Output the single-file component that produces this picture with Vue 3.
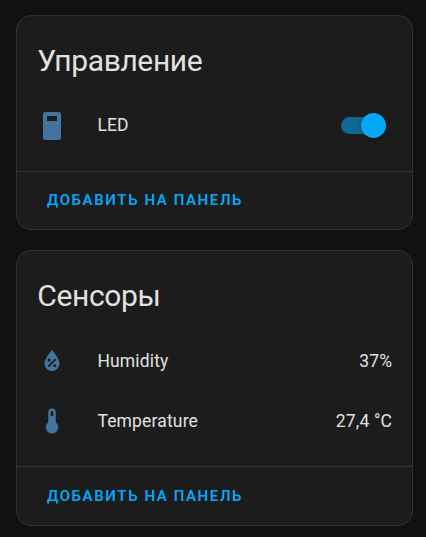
<script setup>
const cards = [
  {
    id: 'controls',
    title: 'Управление',
    rows: [{ icon: 'switch', name: 'LED', toggle: true }],
  },
  {
    id: 'sensors',
    title: 'Сенсоры',
    rows: [
      { icon: 'humidity', name: 'Humidity', value: '37%' },
      { icon: 'thermometer', name: 'Temperature', value: '27,4 °C' },
    ],
  },
]

const icons = {
  switch:
    'M6.4 1.6H17.6A1.6 1.6 0 0 1 19.2 3.2V22.4A1.6 1.6 0 0 1 17.6 24H6.4A1.6 1.6 0 0 1 4.8 22.4V3.2A1.6 1.6 0 0 1 6.4 1.6M8.4 4.8A.4 .4 0 0 0 8 5.2V8.4A.4 .4 0 0 0 8.4 8.8H15.6A.4 .4 0 0 0 16 8.4V5.2A.4 .4 0 0 0 15.6 4.8Z',
  humidity:
    'M12,3.25C12,3.25 6,10 6,14C6,17.32 8.69,20 12,20A6,6 0 0,0 18,14C18,10 12,3.25 12,3.25M14.47,9.97L15.53,11.03L9.53,17.03L8.47,15.97M9.75,10A1.25,1.25 0 0,1 11,11.25A1.25,1.25 0 0,1 9.75,12.5A1.25,1.25 0 0,1 8.5,11.25A1.25,1.25 0 0,1 9.75,10M14.25,14.5A1.25,1.25 0 0,1 15.5,15.75A1.25,1.25 0 0,1 14.25,17A1.25,1.25 0 0,1 13,15.75A1.25,1.25 0 0,1 14.25,14.5Z',
  thermometer:
    'M15 13V5A3 3 0 0 0 9 5V13A5 5 0 1 0 15 13M12 4A1 1 0 0 1 13 5V8H11V5A1 1 0 0 1 12 4Z',
}
</script>

<template>
  <main class="view">
    <section v-for="card in cards" :key="card.id" class="card" :class="card.id">
      <h1 class="title">{{ card.title }}</h1>
      <div class="rows">
        <div v-for="row in card.rows" :key="row.name" class="row">
          <svg class="icon" viewBox="0 0 24 24">
            <path :d="icons[row.icon]" fill-rule="evenodd" />
          </svg>
          <span class="name">{{ row.name }}</span>
          <span v-if="row.toggle" class="toggle" role="switch" aria-checked="true">
            <span class="thumb"></span>
          </span>
          <span v-else class="value">{{ row.value }}</span>
        </div>
      </div>
      <footer class="actions">
        <button class="add" type="button">Добавить на панель</button>
      </footer>
    </section>
  </main>
</template>

<style>
body {
  background: #111111;
}
</style>

<style scoped>
.view {
  box-sizing: border-box;
  height: 537px;
  padding: 15px 13px 0 16px;
  display: flex;
  flex-direction: column;
  gap: 20px;
  overflow: hidden;
  font-family: Roboto, 'Noto Sans', sans-serif;
  color: #e1e1e1;
}
.card {
  box-sizing: border-box;
  display: flex;
  flex-direction: column;
  flex: none;
  height: 215px;
  border: 1px solid #333333;
  border-radius: 15px;
  background: #1c1c1c;
}
.card.sensors {
  height: 276px;
}
.title {
  margin: 0;
  padding: 15px 20px 0 20.3px;
  font-size: 30px;
  font-weight: 400;
  line-height: 60px;
  letter-spacing: -0.38px;
}
.rows {
  flex: 1;
  display: flex;
  flex-direction: column;
  gap: 10px;
  padding: 9px 20px 0;
}
.sensors .rows {
  padding-top: 10px;
}
.row {
  display: flex;
  align-items: center;
  height: 50px;
}
.icon {
  flex: none;
  width: 30px;
  height: 30px;
  fill: #44739e;
}
.name {
  flex: 1;
  margin-left: 30.4px;
  font-size: 17.5px;
  line-height: 25px;
  letter-spacing: 0.16px;
}
.value {
  margin-right: -0.15px;
  font-size: 17.5px;
  line-height: 25px;
  letter-spacing: 0.16px;
}
.toggle {
  display: flex;
  align-items: center;
  justify-content: flex-end;
  width: 45px;
  height: 17px;
  margin-right: 6px;
  border-radius: 9px;
  background: #0f6894;
}
.thumb {
  flex: none;
  width: 25px;
  height: 25px;
  border-radius: 50%;
  background: #03a9f8;
  box-shadow: 0 1px 4px rgba(0, 0, 0, 0.35);
}
.actions {
  box-sizing: border-box;
  display: flex;
  align-items: center;
  height: 58px;
  border-top: 1px solid #333333;
  padding: 0 20px;
}
.sensors .actions {
  height: 59px;
}
.add {
  margin: 0;
  padding: 0 10px;
  border: 0;
  background: none;
  color: #03a9f8;
  font-family: inherit;
  font-size: 15px;
  font-weight: 600;
  line-height: 45px;
  letter-spacing: 1.6px;
  text-transform: uppercase;
}
</style>
